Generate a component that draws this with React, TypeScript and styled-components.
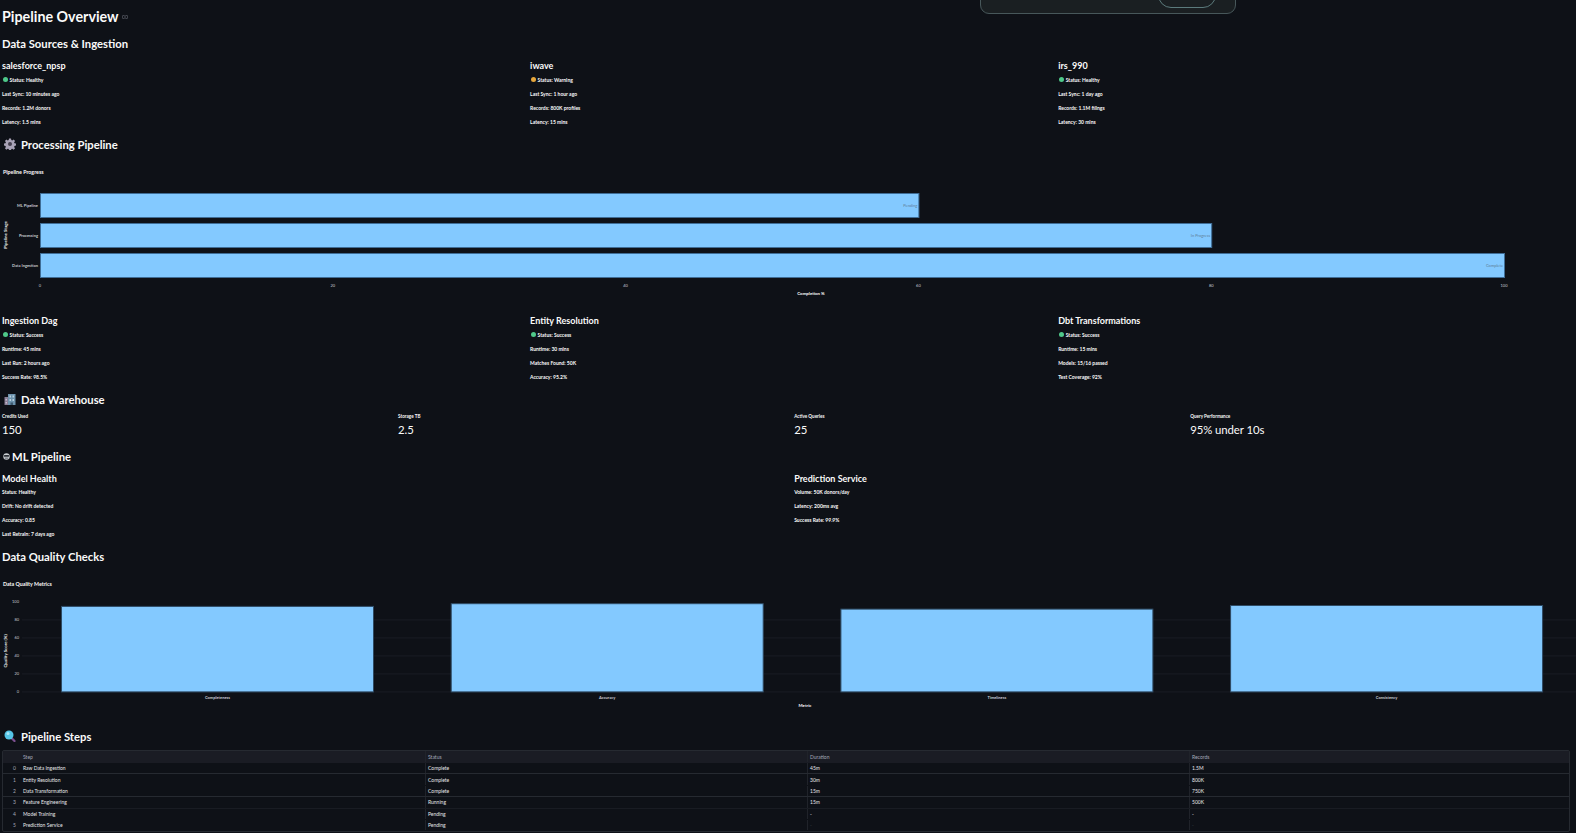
import * as React from 'react';
import styled, { createGlobalStyle } from 'styled-components';

const GlobalStyle = createGlobalStyle`
    html, body {
        margin: 0;
        padding: 0;
        background: #0e1117;
        overflow: hidden;
    }
    body {
        color: #fafafa;
        font-family: Lato, "Noto Sans", sans-serif;
    }
`;

const Page = styled.div`
    width: 1576px;
    height: 833px;
    overflow: hidden;
    position: relative;
    background: #0e1117;
    padding-left: 2px;
    box-sizing: border-box;
`;

const Toast = styled.div`
    position: absolute;
    left: 980px;
    top: -20px;
    width: 256px;
    height: 34px;
    box-sizing: border-box;
    background: #1a1f22;
    border: 1px solid #47575a;
    border-radius: 9px;
`;

const ToastButton = styled.div`
    position: absolute;
    right: 19px;
    top: 1px;
    width: 58px;
    height: 26px;
    box-sizing: border-box;
    border: 1px solid #5b7a7c;
    border-radius: 14px;
`;

const Title = styled.h1`
    margin: 0;
    height: 32px;
    display: flex;
    align-items: center;
    gap: 3px;
    font-size: 14.3px;
    font-weight: 700;
`;

const Heading = styled.h2<{ $height: number; $top?: number; $gap?: number }>`
    margin: ${({ $top }) => $top || 0}px 0 0;
    height: ${({ $height }) => $height}px;
    display: flex;
    align-items: center;
    gap: ${({ $gap }) => $gap ?? 5}px;
    font-size: 11.25px;
    font-weight: 700;
`;

const IconSlot = styled.span`
    display: flex;
    margin-left: 2px;
`;

const Columns = styled.div<{ $count: number; $top?: number }>`
    width: 1579px;
    margin-top: ${({ $top }) => $top || 0}px;
    display: grid;
    grid-template-columns: repeat(${({ $count }) => $count}, 1fr);
    column-gap: 5.3px;
`;

const SubHeading = styled.h3`
    margin: 0;
    height: 14px;
    display: flex;
    align-items: center;
    font-size: 9px;
    font-weight: 700;
`;

const Line = styled.p`
    margin: 0;
    height: 14px;
    display: flex;
    align-items: center;
    gap: 1.5px;
    font-size: 5px;
    font-weight: 700;
    white-space: nowrap;
`;

const Dot = styled.span<{ $color: string }>`
    width: 5.5px;
    height: 5.5px;
    margin-left: 0.5px;
    border-radius: 50%;
    background: ${({ $color }) => $color};
`;

const ChartBox = styled.svg`
    display: block;
    font-family: Lato, sans-serif;
`;

const MetricLabel = styled.div`
    height: 9px;
    display: flex;
    align-items: center;
    font-size: 4.6px;
    font-weight: 700;
`;

const MetricValue = styled.div`
    height: 17px;
    display: flex;
    align-items: center;
    font-size: 11.4px;
    letter-spacing: -0.1px;
`;

const TableWrap = styled.div`
    width: 1568px;
    box-sizing: border-box;
    border: 1px solid #262a31;
    border-radius: 2px;
    font-size: 5px;
`;

const Row = styled.div<{ $line?: 'strong' | 'faint'; $head?: boolean }>`
    display: grid;
    grid-template-columns: 18px 404px 382px 382px 1fr;
    height: ${({ $head }) => ($head ? 11.5 : 11.4)}px;
    box-sizing: border-box;
    background: ${({ $head }) => ($head ? '#1a1c24' : 'transparent')};
    color: ${({ $head }) => ($head ? '#a3a8b8' : '#e6e7ea')};
    border-bottom: 1px solid ${({ $line }) =>
        $line === 'strong' ? '#262a31' : $line === 'faint' ? '#191c23' : 'transparent'};
`;

const Cell = styled.div<{ $index?: boolean; $dim?: boolean }>`
    display: flex;
    align-items: center;
    justify-content: ${({ $index }) => ($index ? 'flex-end' : 'flex-start')};
    padding: ${({ $index }) => ($index ? '0 5px 0 0' : '0 0 0 2px')};
    color: ${({ $index, $dim }) => ($dim ? '#3a3e47' : $index ? '#a3a8b8' : 'inherit')};
    white-space: nowrap;
    & + & + & {
        border-left: 1px solid #20232a;
    }
`;

const LinkMark = () => (
    <svg width="6" height="4" viewBox="0 0 12 8" style={{ marginTop: 2 }}>
        <path d="M5 1H3a3 3 0 0 0 0 6h2M7 1h2a3 3 0 0 1 0 6H7M4 4h4" fill="none" stroke="#6b6f78" strokeWidth="1.4" />
    </svg>
);

const GearIcon = () => (
    <svg width="12" height="12" viewBox="0 0 24 24">
        <path
            fill="#a9a3b6"
            d="M10 1h4l.6 3.2 2 .8 2.7-1.9 2.8 2.8-1.9 2.7.8 2 3 .6v4l-3 .6-.8 2 1.9 2.7-2.8 2.8-2.7-1.9-2 .8-.6 3h-4l-.6-3-2-.8-2.7 1.9-2.8-2.8 1.9-2.7-.8-2-3-.6v-4l3-.6.8-2-1.9-2.7 2.8-2.8 2.7 1.9 2-.8z"
        />
        <circle cx="12" cy="12" r="4" fill="#45404f" />
    </svg>
);

const BuildingIcon = () => (
    <svg width="12" height="13" viewBox="0 0 24 24">
        <rect x="1" y="7" width="7" height="16" fill="#8a7f96" />
        <rect x="8" y="1" width="15" height="22" fill="#6d93ad" />
        <rect x="11" y="4" width="3" height="4" fill="#b9d0de" />
        <rect x="17" y="4" width="3" height="4" fill="#b9d0de" />
        <rect x="11" y="11" width="3" height="4" fill="#b9d0de" />
        <rect x="17" y="11" width="3" height="4" fill="#b9d0de" />
        <rect x="13" y="18" width="5" height="5" fill="#3d5a70" />
        <rect x="3" y="11" width="3" height="3" fill="#c4bccd" />
        <rect x="3" y="17" width="3" height="3" fill="#c4bccd" />
    </svg>
);

const RobotIcon = () => (
    <svg width="7" height="7" viewBox="0 0 24 24" style={{ marginLeft: -1.5 }}>
        <circle cx="12" cy="12" r="11" fill="#c9ced2" />
        <rect x="3" y="7" width="18" height="6" rx="3" fill="#2b2f36" />
        <rect x="6" y="16" width="12" height="3" fill="#4b4f58" />
    </svg>
);

const SearchIcon = () => (
    <svg width="12" height="12" viewBox="0 0 24 24">
        <path d="M15 16l6 6" stroke="#7b4f8f" strokeWidth="4.5" strokeLinecap="round" />
        <circle cx="10" cy="10" r="9" fill="#55c6e8" />
        <circle cx="8" cy="7" r="3" fill="#a8e6f6" />
    </svg>
);

const tickColor = '#c8cbd2';
const barBorder = '#3f6d96';

const stages = [
    { name: 'ML Pipeline', value: 60, status: 'Pending' },
    { name: 'Processing', value: 80, status: 'In Progress' },
    { name: 'Data Ingestion', value: 100, status: 'Complete' },
];

// horizontal progress chart
const ProgressChart = () => {
    const x0 = 38;
    const unit = (1504 - 40) / 100;
    return (
        <ChartBox width="1570" height="154" viewBox="0 0 1570 154">
            <text x="1" y="14" fontSize="5.3" fontWeight="700" fill="#fafafa">Pipeline Progress</text>
            {stages.map((s, i) => (
                <g key={s.name}>
                    <rect
                        x={x0 + 0.5}
                        y={33.5 + i * 30}
                        width={s.value * unit}
                        height={24}
                        fill="#83c9ff"
                        stroke={barBorder}
                    />
                    <text x={x0 - 2} y={47 + i * 30} fontSize="4" fontWeight="700" textAnchor="end" fill={tickColor}>{s.name}</text>
                    <text x={x0 + s.value * unit - 1} y={47 + i * 30} fontSize="4" textAnchor="end" fill="#5f7f99">{s.status}</text>
                </g>
            ))}
            {[0, 20, 40, 60, 80, 100].map(t => (
                <text key={t} x={x0 + t * unit} y={127} fontSize="4" textAnchor="middle" fill={tickColor}>{t}</text>
            ))}
            <text x={809} y={135} fontSize="4.4" fontWeight="700" textAnchor="middle" fill="#fafafa">Completion %</text>
            <text transform="translate(5 75) rotate(-90)" fontSize="4.4" fontWeight="700" textAnchor="middle" fill="#fafafa">Pipeline Stage</text>
        </ChartBox>
    );
};

const quality = [
    { name: 'Completeness', value: 95 },
    { name: 'Accuracy', value: 98 },
    { name: 'Timeliness', value: 92 },
    { name: 'Consistency', value: 96 },
];

// column chart
const QualityChart = () => {
    const base = 119.9;
    return (
        <ChartBox width="1574" height="150.3" viewBox="0 0 1574 150.3">
            <text x="1" y="14" fontSize="5.3" fontWeight="700" fill="#fafafa">Data Quality Metrics</text>
            {[0, 20, 40, 60, 80, 100].map(t => (
                <g key={t}>
                    {t < 100 && <line x1="20" x2="1574" y1={base - t * 0.9} y2={base - t * 0.9} stroke="#1a1d24" />}
                    <text x="17" y={base - t * 0.9 + 1.5} fontSize="4" textAnchor="end" fill={tickColor}>{t}</text>
                </g>
            ))}
            {quality.map((q, i) => (
                <g key={q.name}>
                    <rect
                        x={59.5 + i * 389.7}
                        y={base - q.value * 0.9}
                        width={312}
                        height={q.value * 0.9}
                        fill="#83c9ff"
                        stroke="#2e4a63"
                    />
                    <text x={215.5 + i * 389.7} y={126.8} fontSize="4" fontWeight="700" textAnchor="middle" fill={tickColor}>{q.name}</text>
                </g>
            ))}
            <text x={803} y={134.6} fontSize="4.4" fontWeight="700" textAnchor="middle" fill="#fafafa">Metric</text>
            <text transform="translate(5 79) rotate(-90)" fontSize="4.4" fontWeight="700" textAnchor="middle" fill="#fafafa">Quality Score (%)</text>
        </ChartBox>
    );
};

const sources = [
    { name: 'salesforce_npsp', dot: '#4fc98a', status: 'Healthy', lines: ['Last Sync: 10 minutes ago', 'Records: 1.2M donors', 'Latency: 1.5 mins'] },
    { name: 'iwave', dot: '#e5a63c', status: 'Warning', lines: ['Last Sync: 1 hour ago', 'Records: 800K profiles', 'Latency: 15 mins'] },
    { name: 'irs_990', dot: '#4fc98a', status: 'Healthy', lines: ['Last Sync: 1 day ago', 'Records: 1.1M filings', 'Latency: 30 mins'] },
];

const dags = [
    { name: 'Ingestion Dag', lines: ['Runtime: 45 mins', 'Last Run: 2 hours ago', 'Success Rate: 98.5%'] },
    { name: 'Entity Resolution', lines: ['Runtime: 30 mins', 'Matches Found: 50K', 'Accuracy: 95.2%'] },
    { name: 'Dbt Transformations', lines: ['Runtime: 15 mins', 'Models: 15/16 passed', 'Test Coverage: 92%'] },
];

const metrics = [
    { label: 'Credits Used', value: '150' },
    { label: 'Storage TB', value: '2.5' },
    { label: 'Active Queries', value: '25' },
    { label: 'Query Performance', value: '95% under 10s' },
];

const steps: { cells: string[]; line?: 'strong' | 'faint'; dim?: boolean }[] = [
    { cells: ['Raw Data Ingestion', 'Complete', '45m', '1.5M'], line: 'strong' },
    { cells: ['Entity Resolution', 'Complete', '30m', '800K'] },
    { cells: ['Data Transformation', 'Complete', '15m', '750K'], line: 'strong' },
    { cells: ['Feature Engineering', 'Running', '15m', '500K'], line: 'faint' },
    { cells: ['Model Training', 'Pending', '-', '-'] },
    { cells: ['Prediction Service', 'Pending', '-', '-'], dim: true },
];

const App: React.FC = () => (
    <Page>
        <GlobalStyle />
        <Toast>
            <ToastButton />
        </Toast>
        <Title>Pipeline Overview <LinkMark /></Title>
        <Heading $height={22}>Data Sources &amp; Ingestion</Heading>
        <Columns $count={3} $top={4.5}>
            {sources.map(s => (
                <div key={s.name}>
                    <SubHeading>{s.name}</SubHeading>
                    <Line><Dot $color={s.dot} />Status: {s.status}</Line>
                    {s.lines.map(l => <Line key={l}>{l}</Line>)}
                </div>
            ))}
        </Columns>
        <Heading $height={31}><IconSlot><GearIcon /></IconSlot>Processing Pipeline</Heading>
        <ProgressChart />
        <Columns $count={3}>
            {dags.map(d => (
                <div key={d.name}>
                    <SubHeading>{d.name}</SubHeading>
                    <Line><Dot $color="#4fc98a" />Status: Success</Line>
                    {d.lines.map(l => <Line key={l}>{l}</Line>)}
                </div>
            ))}
        </Columns>
        <Heading $height={24} $top={4}><IconSlot><BuildingIcon /></IconSlot>Data Warehouse</Heading>
        <Columns $count={4}>
            {metrics.map(m => (
                <div key={m.label}>
                    <MetricLabel>{m.label}</MetricLabel>
                    <MetricValue>{m.value}</MetricValue>
                </div>
            ))}
        </Columns>
        <Heading $height={30} $top={3.7} $gap={2.5}><IconSlot><RobotIcon /></IconSlot>ML Pipeline</Heading>
        <Columns $count={2}>
            <div>
                <SubHeading>Model Health</SubHeading>
                {['Status: Healthy', 'Drift: No drift detected', 'Accuracy: 0.85', 'Last Retrain: 7 days ago'].map(l => <Line key={l}>{l}</Line>)}
            </div>
            <div>
                <SubHeading>Prediction Service</SubHeading>
                {['Volume: 50K donors/day', 'Latency: 200ms avg', 'Success Rate: 99.9%'].map(l => <Line key={l}>{l}</Line>)}
            </div>
        </Columns>
        <Heading $height={31}>Data Quality Checks</Heading>
        <QualityChart />
        <Heading $height={28}><IconSlot><SearchIcon /></IconSlot>Pipeline Steps</Heading>
        <TableWrap>
            <Row $head>
                <Cell />
                <Cell>Step</Cell>
                <Cell>Status</Cell>
                <Cell>Duration</Cell>
                <Cell>Records</Cell>
            </Row>
            {steps.map((r, i) => (
                <Row key={r.cells[0]} $line={r.line}>
                    <Cell $index>{i}</Cell>
                    <Cell>{r.cells[0]}</Cell>
                    <Cell>{r.cells[1]}</Cell>
                    <Cell $dim={r.dim}>{r.cells[2]}</Cell>
                    <Cell $dim={r.dim}>{r.cells[3]}</Cell>
                </Row>
            ))}
        </TableWrap>
    </Page>
);

export default App;
